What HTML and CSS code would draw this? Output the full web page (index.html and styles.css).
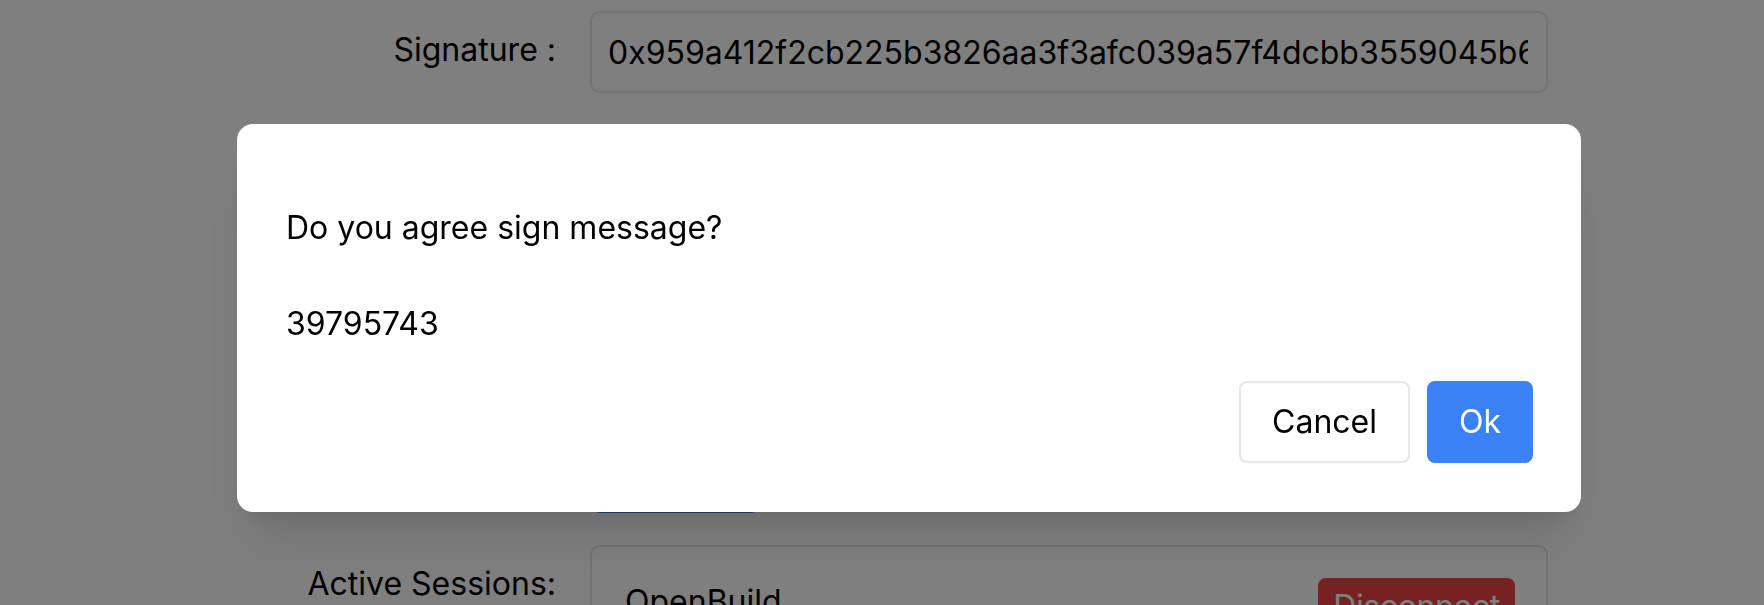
FILE: index.html
```html
<!DOCTYPE html>
<html lang="en">
<head>
<meta charset="utf-8">
<title>Sign message</title>
<link rel="stylesheet" href="styles.css">
</head>
<body>
<main class="page">
  <div class="form">
    <label class="label label-sig" for="sig">Signature :</label>
    <input id="sig" class="field" type="text" readonly value="0x959a412f2cb225b3826aa3f3afc039a57f4dcbb3559045b671c2e8f0d4a6b93e1f7c55a">

    <div class="label"></div>
    <div class="field field-blank"></div>

    <div class="label"></div>
    <div class="field field-tall"></div>

    <div class="label"></div>
    <div class="action-row"><span class="btn-primary-bg"></span></div>

    <div class="label label-sessions">Active Sessions:</div>
    <div class="sessions">
      <div class="session-row">
        <span class="session-name">OpenBuild</span>
        <span class="btn-danger">Disconnect</span>
      </div>
    </div>
  </div>
</main>

<div class="overlay">
  <div class="modal" role="dialog">
    <p class="modal-text">Do you agree sign message?

39795743</p>
    <div class="modal-actions">
      <button class="btn btn-cancel" type="button">Cancel</button>
      <button class="btn btn-ok" type="button">Ok</button>
    </div>
  </div>
</div>
</body>
</html>
```

FILE: styles.css
```css
* { box-sizing: border-box; }

html, body {
  margin: 0;
  padding: 0;
  background: #ffffff;
  font-family: Inter, "Liberation Sans", sans-serif;
  font-size: 32px;
  line-height: 48px;
  color: #000000;
  overflow: hidden;
}

.page {
  padding-top: 11px;
}

.form {
  display: grid;
  grid-template-columns: 300px 958px;
  column-gap: 34px;
  row-gap: 32px;
  margin-left: 256px;
  align-items: start;
}

.label {
  text-align: right;
  white-space: nowrap;
}

.label-sig {
  align-self: center;
  margin-top: -4px;
}

.label-sessions {
  margin-top: 15px;
}

.field {
  display: block;
  width: 958px;
  height: 82px;
  border: 2px solid #e5e7eb;
  border-radius: 10px;
  padding: 0 18px 0 16px;
  font-family: Inter, "Liberation Sans", sans-serif;
  font-size: 32px;
  color: #000000;
  background: #ffffff;
  outline: none;
}

.field-tall {
  height: 162px;
}

.action-row {
  display: flex;
  height: 80px;
}

.btn-primary-bg {
  display: block;
  width: 167px;
  height: 80px;
  margin-left: 2px;
  background: #3b82f6;
  border-radius: 8px;
}

.sessions {
  border: 2px solid #e5e7eb;
  border-radius: 10px;
  padding: 31px 31px 31px 33px;
  min-height: 200px;
}

.session-row {
  display: flex;
  justify-content: space-between;
  align-items: flex-start;
}

.session-name {
  font-size: 32px;
}

.btn-danger {
  display: block;
  background: #ef4444;
  color: #ffffff;
  border-radius: 8px;
  padding: 5px 0 16px;
  width: 197px;
  text-align: center;
  white-space: nowrap;
  letter-spacing: -0.4px;
  overflow: hidden;
}

.overlay {
  position: fixed;
  inset: 0;
  background: rgba(0, 0, 0, 0.5);
  padding: 124px 0 0 237px;
}

.modal {
  width: 1344px;
  background: #ffffff;
  border-radius: 16px;
  padding: 80px 48px 49px 49px;
  box-shadow: 0 40px 50px -10px rgba(0, 0, 0, 0.1), 0 16px 20px -12px rgba(0, 0, 0, 0.1);
}

.modal-text {
  margin: 0;
  white-space: pre-line;
}

.modal-actions {
  display: flex;
  justify-content: flex-end;
  gap: 17px;
  margin-top: 33px;
}

.btn {
  font-family: Inter, "Liberation Sans", sans-serif;
  font-size: 32px;
  line-height: 48px;
  height: 82px;
  border-radius: 8px;
  cursor: pointer;
}

.btn-cancel {
  width: 171px;
  background: #ffffff;
  color: #000000;
  border: 2px solid #e5e7eb;
}

.btn-ok {
  width: 106px;
  background: #3b82f6;
  color: #ffffff;
  border: 2px solid #3b82f6;
}
```
